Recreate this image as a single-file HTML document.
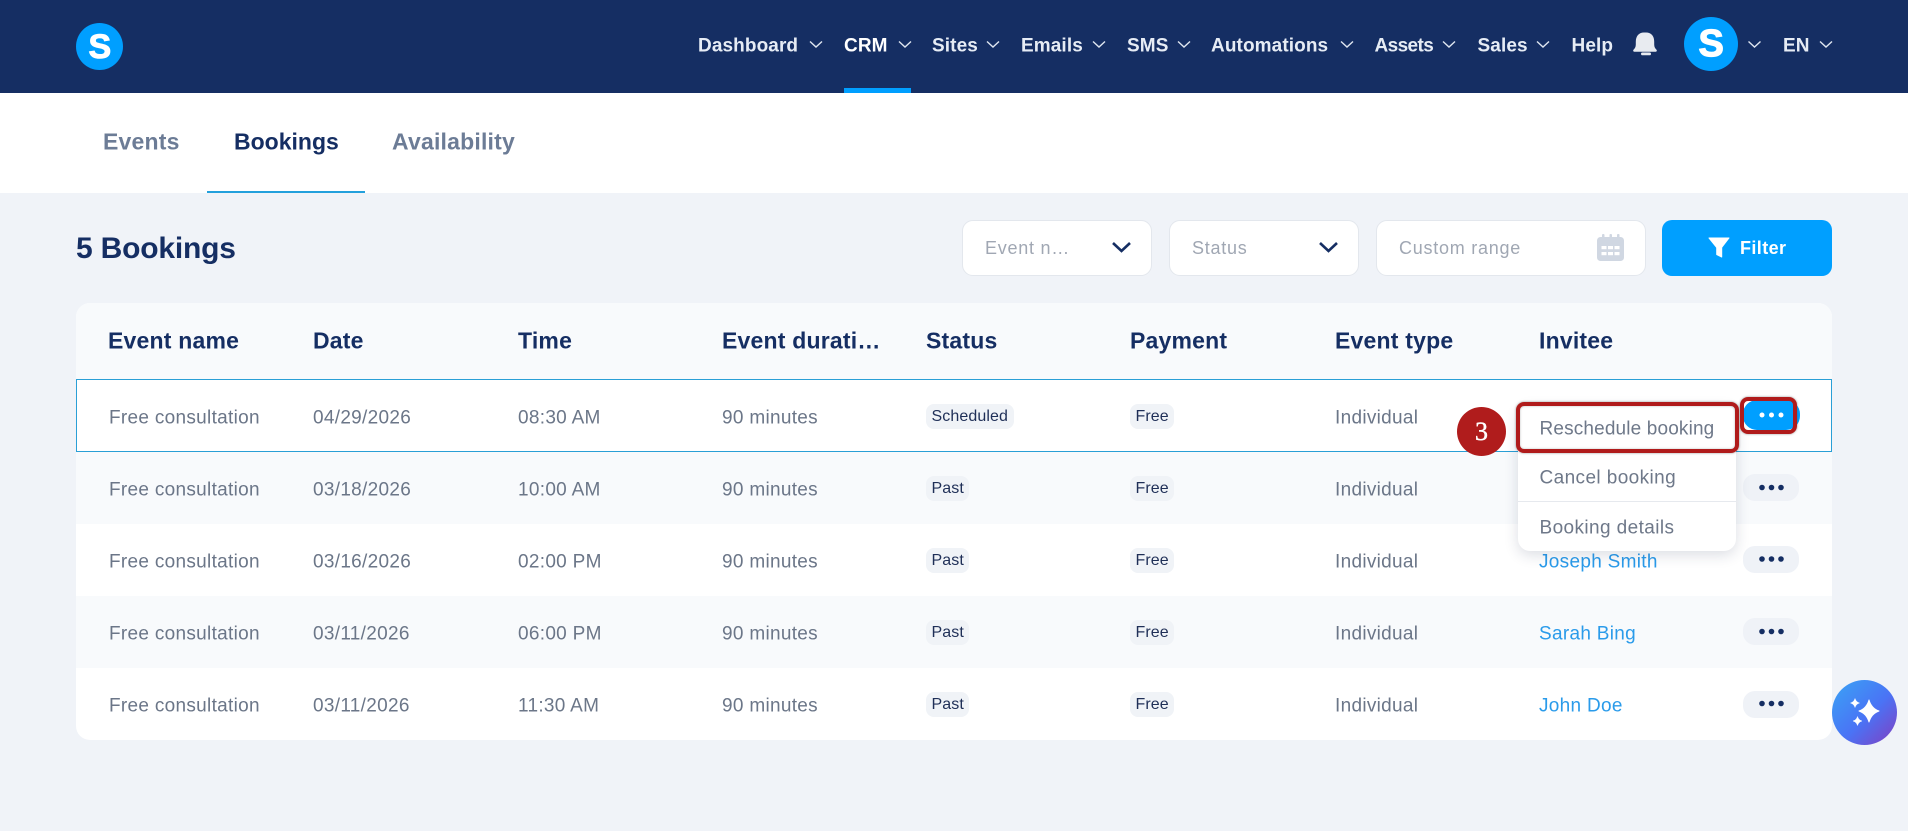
<!DOCTYPE html>
<html lang="en"><head><meta charset="utf-8"><title>Bookings</title>
<style>
*{box-sizing:border-box}
html,body{margin:0;padding:0;width:1908px;height:831px;overflow:hidden;background:#f0f3f8;font-family:"Liberation Sans",sans-serif}
.a{position:absolute}
.t{position:absolute;white-space:nowrap;line-height:1;transform:translateY(-50%)}
.nav{font-size:19px;font-weight:700;color:#e6ecf5;top:45.5px;letter-spacing:.1px}
.tab{font-size:23px;font-weight:700;color:#6c7c96;top:142px}
.th{font-size:23px;font-weight:700;color:#152e63;top:341px;letter-spacing:.2px}
.td{font-size:19px;color:#6b7688;letter-spacing:.3px;margin-top:.5px}
.ph{font-size:18px;color:#a0a7b3;top:248px;letter-spacing:.75px}
.bd{position:absolute;height:25px;border-radius:8px;background:#f0f3f7;font-size:16px;line-height:25px;color:#1f2f57;padding-left:5.5px;letter-spacing:.1px;white-space:nowrap}
.ln{font-size:19px;color:#2a9bea;letter-spacing:.3px;margin-top:.5px}
.mi{font-size:19px;color:#6e7889;letter-spacing:.4px}
.dot{position:absolute;left:1743px;width:56px;height:27px;border-radius:12px;background:#eff2f7}
.sel{position:absolute;top:220px;height:56px;background:#fff;border:1px solid #e3e7ed;border-radius:11px}
.row{position:absolute;left:76px;width:1756px}
svg{position:absolute;overflow:visible}
</style></head><body>

<div class="a" style="left:0;top:0;width:1908px;height:93px;background:#152e63"></div>
<div class="a" style="left:76px;top:23px;width:47px;height:47px;border-radius:50%;background:#009fff"></div>
<div class="t" style="left:88.5px;top:47px;font-size:34px;font-weight:700;color:#fff;-webkit-text-stroke:1px #fff">S</div>

<div class="t nav" style="left:698px">Dashboard</div>
<div class="t nav" style="left:844px;color:#fff">CRM</div>
<div class="t nav" style="left:932px">Sites</div>
<div class="t nav" style="left:1021px">Emails</div>
<div class="t nav" style="left:1127px">SMS</div>
<div class="t nav" style="left:1211px">Automations</div>
<div class="t nav" style="left:1374.5px;letter-spacing:-.6px">Assets</div>
<div class="t nav" style="left:1477.5px">Sales</div>
<div class="t nav" style="left:1571.5px">Help</div>
<div class="t nav" style="left:1783px">EN</div>
<svg class="a" style="left:0;top:0" width="1908" height="93" fill="none" stroke="#dfe6f0" stroke-width="1.4">
<path d="M810 41.500l6 5.500 6-5.500M899 41.500l6 5.500 6-5.500M987 41.500l6 5.500 6-5.500M1093 41.500l6 5.500 6-5.500M1178 41.500l6 5.500 6-5.500M1341 41.500l6 5.500 6-5.500M1443 41.500l6 5.500 6-5.500M1537 41.500l6 5.500 6-5.500M1748.500 41.500l6 5.500 6-5.500M1820 41.500l6 5.500 6-5.500"/>
<path fill="#e8ebf0" stroke="none" d="M1646 32.500c5.300 0 8.200 3.700 8.200 9.200v2.800c0 2.500 1 4 2.300 5.300.7.800.2 1.900-.8 1.900h-21.400c-1 0-1.500-1.100-.8-1.900 1.300-1.300 2.300-2.800 2.300-5.300v-2.800c0-5.500 3-9.200 8.200-9.200z"/>
<rect x="1641" y="52.500" width="10" height="2.800" rx="1.400" fill="#e8ebf0" stroke="none"/>
</svg>
<div class="a" style="left:844px;top:88px;width:67px;height:5px;background:#009fff"></div>
<div class="a" style="left:1684px;top:17px;width:54px;height:54px;border-radius:50%;background:#009fff"></div>
<div class="t" style="left:1698.5px;top:44px;font-size:38px;font-weight:700;color:#fff;-webkit-text-stroke:1.2px #fff">S</div>

<div class="a" style="left:0;top:93px;width:1908px;height:100px;background:#fff"></div>
<div class="t tab" style="left:103px;letter-spacing:.2px">Events</div>
<div class="t tab" style="left:234px;color:#152e63">Bookings</div>
<div class="t tab" style="left:392px;letter-spacing:.2px">Availability</div>
<div class="a" style="left:206.500px;top:191px;width:158px;height:2px;background:#23a0dc"></div>

<div class="t" style="left:76px;top:249px;font-size:30px;font-weight:700;color:#152e63;letter-spacing:-.2px">5 Bookings</div>

<div class="sel" style="left:962px;width:190px"></div>
<div class="t ph" style="left:985px">Event n…</div>
<div class="sel" style="left:1169px;width:190px"></div>
<div class="t ph" style="left:1192px">Status</div>
<div class="sel" style="left:1376px;width:270px"></div>
<div class="t ph" style="left:1399px">Custom range</div>
<div class="a" style="left:1662px;top:220px;width:170px;height:56px;border-radius:10px;background:#009fff"></div>
<div class="t" style="left:1740px;top:248px;font-size:18px;font-weight:700;color:#fff;letter-spacing:.4px">Filter</div>
<svg class="a" style="left:0;top:0" width="1908" height="300">
<path d="M1113 243l8.500 8 8.500-8M1320 243l8.500 8 8.500-8" fill="none" stroke="#152e63" stroke-width="2.600"/>
<path d="M1709 238h20l-7.300 9.500v9.500l-5-2.500v-7z" fill="#fff" stroke="#fff" stroke-width="1" stroke-linejoin="round"/>
<rect x="1597" y="237" width="27" height="24" rx="3.500" fill="#d0d7e2"/>
<rect x="1602" y="234" width="2.500" height="5" rx="1" fill="#d0d7e2"/><rect x="1609.500" y="234" width="2.500" height="5" rx="1" fill="#d0d7e2"/><rect x="1617" y="234" width="2.500" height="5" rx="1" fill="#d0d7e2"/>
<g fill="#fff"><rect x="1601.500" y="246" width="5" height="3.200"/><rect x="1608" y="246" width="5" height="3.200"/><rect x="1614.500" y="246" width="5" height="3.200"/><rect x="1601.500" y="252" width="5" height="3.200"/><rect x="1608" y="252" width="5" height="3.200"/><rect x="1614.500" y="252" width="5" height="3.200"/></g>
</svg>

<div class="a" style="left:76px;top:303px;width:1756px;height:437px;border-radius:14px;background:#fff;overflow:hidden">
<div class="a" style="left:0;top:0;width:1756px;height:76px;background:#f8fafc"></div>
<div class="a" style="left:0;top:149px;width:1756px;height:72px;background:#f8fafc"></div>
<div class="a" style="left:0;top:293px;width:1756px;height:72px;background:#f8fafc"></div>
</div>
<div class="row" style="top:379px;height:73px;background:#fff;border:1px solid #2a9fd6"></div>

<div class="t th" style="left:108px">Event name</div>
<div class="t th" style="left:313px">Date</div>
<div class="t th" style="left:518px">Time</div>
<div class="t th" style="left:722px">Event durati…</div>
<div class="t th" style="left:926px">Status</div>
<div class="t th" style="left:1130px">Payment</div>
<div class="t th" style="left:1335px">Event type</div>
<div class="t th" style="left:1539px">Invitee</div>

<div class="t td" style="left:109px;top:417px">Free consultation</div>
<div class="t td" style="left:313px;top:417px">04/29/2026</div>
<div class="t td" style="left:518px;top:417px">08:30 AM</div>
<div class="t td" style="left:722px;top:417px">90 minutes</div>
<div class="bd" style="left:926px;top:404px;width:87.500px">Scheduled</div>
<div class="bd" style="left:1130px;top:404px;width:44px">Free</div>
<div class="t td" style="left:1335px;top:417px">Individual</div>

<div class="t td" style="left:109px;top:489px">Free consultation</div>
<div class="t td" style="left:313px;top:489px">03/18/2026</div>
<div class="t td" style="left:518px;top:489px">10:00 AM</div>
<div class="t td" style="left:722px;top:489px">90 minutes</div>
<div class="bd" style="left:926px;top:476px;width:42.500px">Past</div>
<div class="bd" style="left:1130px;top:476px;width:44px">Free</div>
<div class="t td" style="left:1335px;top:489px">Individual</div>
<div class="dot" style="top:474px"></div>

<div class="t td" style="left:109px;top:561px">Free consultation</div>
<div class="t td" style="left:313px;top:561px">03/16/2026</div>
<div class="t td" style="left:518px;top:561px">02:00 PM</div>
<div class="t td" style="left:722px;top:561px">90 minutes</div>
<div class="bd" style="left:926px;top:548px;width:42.500px">Past</div>
<div class="bd" style="left:1130px;top:548px;width:44px">Free</div>
<div class="t td" style="left:1335px;top:561px">Individual</div>
<div class="t ln" style="left:1539px;top:561px">Joseph Smith</div>
<div class="dot" style="top:546px"></div>

<div class="t td" style="left:109px;top:633px">Free consultation</div>
<div class="t td" style="left:313px;top:633px">03/11/2026</div>
<div class="t td" style="left:518px;top:633px">06:00 PM</div>
<div class="t td" style="left:722px;top:633px">90 minutes</div>
<div class="bd" style="left:926px;top:620px;width:42.500px">Past</div>
<div class="bd" style="left:1130px;top:620px;width:44px">Free</div>
<div class="t td" style="left:1335px;top:633px">Individual</div>
<div class="t ln" style="left:1539px;top:633px">Sarah Bing</div>
<div class="dot" style="top:618px"></div>

<div class="t td" style="left:109px;top:705px">Free consultation</div>
<div class="t td" style="left:313px;top:705px">03/11/2026</div>
<div class="t td" style="left:518px;top:705px">11:30 AM</div>
<div class="t td" style="left:722px;top:705px">90 minutes</div>
<div class="bd" style="left:926px;top:692px;width:42.500px">Past</div>
<div class="bd" style="left:1130px;top:692px;width:44px">Free</div>
<div class="t td" style="left:1335px;top:705px">Individual</div>
<div class="t ln" style="left:1539px;top:705px">John Doe</div>
<div class="dot" style="top:691px"></div>

<div class="a" style="left:1743px;top:400px;width:57px;height:30px;border-radius:14px;background:#009fff"></div>
<svg class="a" style="left:0;top:0" width="1908" height="831">
<g fill="#152e63"><circle cx="1762" cy="487.500" r="2.800"/><circle cx="1771.500" cy="487.500" r="2.800"/><circle cx="1781" cy="487.500" r="2.800"/><circle cx="1762" cy="559" r="2.800"/><circle cx="1771.500" cy="559" r="2.800"/><circle cx="1781" cy="559" r="2.800"/><circle cx="1762" cy="631.500" r="2.800"/><circle cx="1771.500" cy="631.500" r="2.800"/><circle cx="1781" cy="631.500" r="2.800"/><circle cx="1762" cy="703.500" r="2.800"/><circle cx="1771.500" cy="703.500" r="2.800"/><circle cx="1781" cy="703.500" r="2.800"/></g>
<g fill="#fff"><circle cx="1762" cy="415" r="2.500"/><circle cx="1771.500" cy="415" r="2.500"/><circle cx="1781" cy="415" r="2.500"/></g>
</svg>

<div class="a" style="left:1518px;top:405px;width:218px;height:146px;border-radius:12px;background:#fff;box-shadow:0 4px 14px rgba(30,45,80,.16)"></div>
<div class="a" style="left:1518px;top:501px;width:218px;height:1px;background:#e6e9ee"></div>
<div class="t mi" style="left:1539.5px;top:477.500px">Cancel booking</div>
<div class="t mi" style="left:1539.5px;top:528px">Booking details</div>
<div class="a" style="left:1516px;top:402px;width:223px;height:51px;border:4px solid #b01b1b;border-radius:8px;box-shadow:0 0 2px rgba(60,60,60,.55),inset 0 0 2px rgba(60,60,60,.35)"></div>
<div class="t mi" style="left:1539.5px;top:429px;letter-spacing:.15px">Reschedule booking</div>
<div class="a" style="left:1740px;top:397px;width:57px;height:37px;border:4px solid #b01b1b;border-radius:8px;box-shadow:0 0 2px rgba(60,60,60,.55)"></div>
<div class="a" style="left:1457px;top:407px;width:49px;height:49px;border-radius:50%;background:#b01c1c"></div>
<div class="t" style="left:1481.500px;top:432px;transform:translate(-50%,-50%);font-family:'Liberation Serif',serif;font-size:26px;color:#fff;-webkit-text-stroke:.4px #fff">3</div>

<div class="a" style="left:1832px;top:680px;width:65px;height:65px;border-radius:50%;background:linear-gradient(135deg,#3ba0f5 5%,#4a73f5 55%,#7c44c6 95%)"></div>
<svg class="a" style="left:0;top:0" width="1908" height="831" fill="#fff">
<path d="M1869 700Q1871.500 708.500 1879 711Q1871.500 713.500 1869 722Q1866.500 713.500 1859 711Q1866.500 708.500 1869 700z" stroke="#fff" stroke-width="1" stroke-linejoin="round"/>
<path d="M1855 698.500Q1856 702 1859.500 703Q1856 704 1855 707.500Q1854 704 1850.500 703Q1854 702 1855 698.500z" stroke="#fff" stroke-width=".5"/>
<path d="M1857.500 716.500Q1858.500 720 1862 721Q1858.500 722 1857.500 725.500Q1856.500 722 1853 721Q1856.500 720 1857.500 716.500z" stroke="#fff" stroke-width=".5"/>
</svg>
</body></html>
